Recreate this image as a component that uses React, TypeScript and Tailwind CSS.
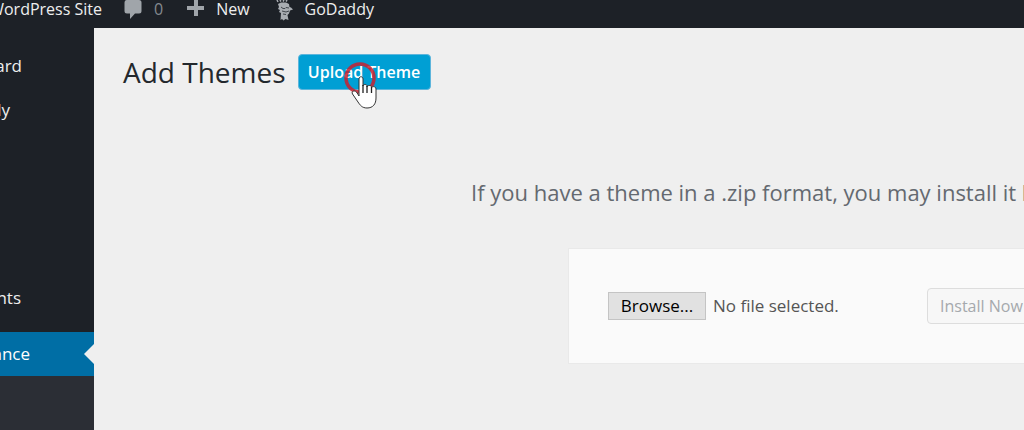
import React from "react";

function CommentIcon() {
  return (
    <svg className="h-5 w-[18px] shrink-0" viewBox="0 0 18 20" fill="#a0a5aa" aria-hidden="true">
      <path d="M2.500 0h12.500a2.500 2.500 0 0 1 2.500 2.500v8.500a2.500 2.500 0 0 1-2.500 2.500h-4L6 19v-5.500H3A2.500 2.500 0 0 1 .500 11V2.500A2.500 2.500 0 0 1 2.500 0z" />
    </svg>
  );
}

function PlusIcon() {
  return (
    <svg className="h-[18px] w-[18px] shrink-0" viewBox="0 0 18 18" fill="#a0a5aa" aria-hidden="true">
      <path d="M7 0h4v6h6v4h-6v6H7v-6H0V6h7z" />
    </svg>
  );
}

function MascotIcon() {
  return (
    <svg className="h-[22px] w-[18px] shrink-0" viewBox="0 0 18 22" aria-hidden="true">
      <path d="M1 0l1 2M4 0l1 1.500M8 0L7 1.500M11 0l-1 1.500" fill="none" stroke="#a9adb2" strokeWidth="1.500" />
      <path
        d="M2 4l3-1.500h5L13 4l.5 3 1.500.500 2 2-3 1-1 3-1.500 1.500 1 5-3-1-2 1.500L6 19l-1.500 1 .5-7-2-1 1-2-2-1L3 7z"
        fill="#a9adb2"
      />
      <path d="M5 7l2 1.500h2l1-1 3 .5M6 11l4 1 3-1M7 14l3 .500" fill="none" stroke="#40454b" strokeWidth="1" />
    </svg>
  );
}

function HandPointer() {
  return (
    <svg className="absolute left-[44px] top-1 h-[52px] w-[40px] pointer-events-none" viewBox="0 0 40 52" aria-hidden="true">
      <circle cx="18" cy="20" r="14" fill="none" stroke="#c9202f" strokeOpacity="0.85" strokeWidth="3.500" />
      <path
        d="M17 38V21c0-3 4-3 4 0v7c0-2 4-2 4 0v1c0-2 4.500-2 4.500 0v1c0-2 4.500-2 4.500 1v9c0 6-3 10-9 10-5 0-7-3-9-6l-5.500-8c-1.500-3 2-4 4-2z"
        fill="#fff"
        stroke="#333"
        strokeWidth="1"
        strokeLinejoin="round"
      />
      <path d="M21 27v8M25 28v7M29.500 29v6" fill="none" stroke="#222" strokeWidth="1.300" />
    </svg>
  );
}

function AdminBar() {
  return (
    <header className="flex h-7 items-start overflow-hidden whitespace-nowrap bg-[#1d2127] text-base leading-[18px] text-[#eeeeee]">
      <a href="#site" className="flex w-[102px] shrink-0 justify-end">WordPress Site</a>
      <a href="#comments" className="ml-[22px] flex gap-3 text-[#84898f]">
        <CommentIcon />
        <span>0</span>
      </a>
      <a href="#new" className="ml-6 flex gap-[11px]">
        <PlusIcon />
        <span>New</span>
      </a>
      <a href="#godaddy" className="ml-[26px] flex gap-[11px]">
        <MascotIcon />
        <span>GoDaddy</span>
      </a>
    </header>
  );
}

function Sidebar() {
  return (
    <nav className="flex w-[94px] shrink-0 flex-col overflow-hidden bg-[#1d2127] pt-4 text-[17px] text-[#eeeeee]">
      <a href="#dashboard" className="flex h-11 w-[22px] items-center justify-end">ard</a>
      <a href="#godaddy-menu" className="flex h-11 w-[10px] items-center justify-end">ly</a>
      <a href="#comments-menu" className="mt-36 flex h-11 w-[21px] items-center justify-end">nts</a>
      <a href="#appearance" className="relative mt-3 flex h-11 items-center bg-[#006ea5] text-white">
        <span className="flex w-[30px] justify-end">ance</span>
        <svg className="absolute right-0 top-3 h-5 w-[10px]" viewBox="0 0 10 20" aria-hidden="true">
          <path d="M10 0v20L0 10z" fill="#efefef" />
        </svg>
      </a>
      <div className="grow bg-[#2b2e35]" />
    </nav>
  );
}

function UploadPanel() {
  return (
    <form className="ml-[474px] flex h-[116px] items-center overflow-hidden whitespace-nowrap border border-r-0 border-[#e9e9e9] bg-[#fafafa] pl-[39px]">
      <input id="theme-zip" type="file" className="sr-only" />
      <label htmlFor="theme-zip" className="flex w-[319px] shrink-0 items-center gap-[7px] text-[17px] text-[#555555]">
        <span className="flex h-7 w-[98px] items-center justify-center border border-[#c4c4c4] bg-[#e1e1e1] text-black">Browse...</span>
        <span>No file selected.</span>
      </label>
      <button type="submit" disabled className="h-9 shrink-0 rounded border border-[#dddddd] bg-[#f7f7f7] px-3 text-base text-[#a5a9ad]">
        Install Now
      </button>
    </form>
  );
}

export default function App() {
  return (
    <div className="flex min-h-screen flex-col overflow-hidden bg-[#efefef] font-['Open_Sans','Noto_Sans',sans-serif]">
      <AdminBar />
      <div className="flex grow">
        <Sidebar />
        <main className="min-w-0 grow overflow-hidden pt-6">
          <div className="flex h-10 items-center gap-3 pl-[29px]">
            <h1 className="text-[28px] text-[#23282d]">Add Themes</h1>
            <div className="relative">
              <button type="button" className="block h-9 w-[133px] rounded-sm border border-[#5db5dc] bg-[#009fd4] text-base font-semibold text-white">
                Upload Theme
              </button>
              <HandPointer />
            </div>
          </div>
          <p className="mt-20 mb-9 overflow-hidden whitespace-nowrap pl-[377px] text-[22px] leading-10 text-[#646970]">
            If you have a theme in a .zip format, you may install it b
          </p>
          <UploadPanel />
        </main>
      </div>
    </div>
  );
}
